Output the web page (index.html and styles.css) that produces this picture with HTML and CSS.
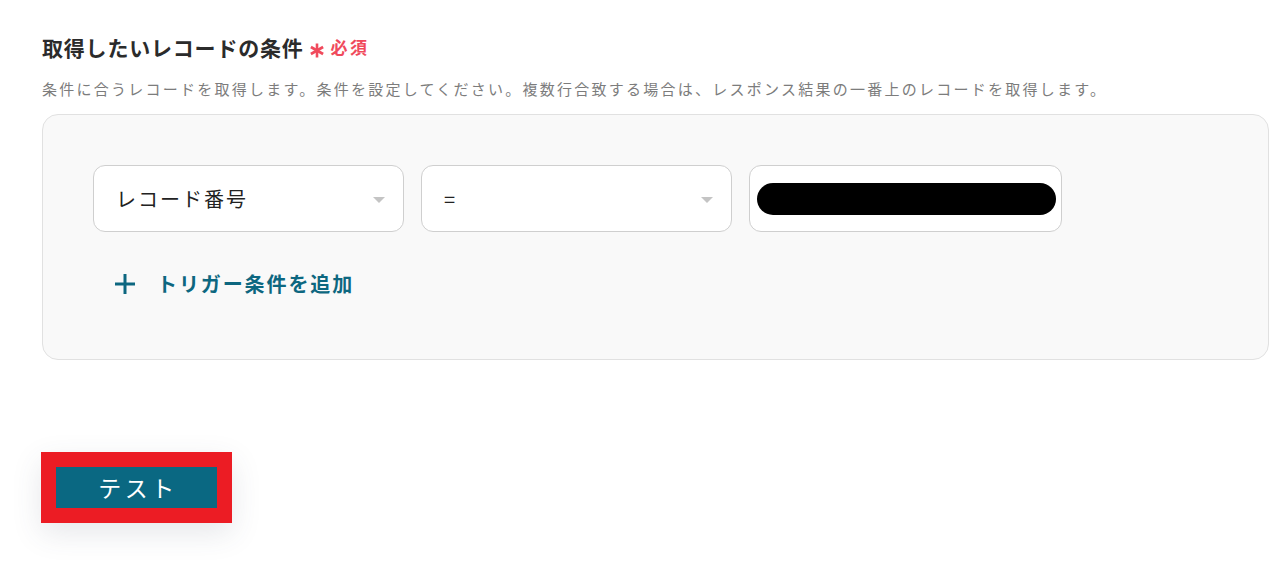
FILE: index.html
```html
<!DOCTYPE html>
<html lang="ja">
<head>
<meta charset="utf-8">
<link rel="stylesheet" href="styles.css">
</head>
<body>
<div class="page">
  <div class="title">取得したいレコードの条件<span class="req"><svg class="ast" width="14" height="15" viewBox="0 0 14 15"><g stroke="#f04a5c" stroke-width="2.6" stroke-linecap="butt"><line x1="7" y1="0.5" x2="7" y2="14.5"/><line x1="0.9" y1="4" x2="13.1" y2="11"/><line x1="0.9" y1="11" x2="13.1" y2="4"/></g></svg>必須</span></div>
  <div class="desc">条件に合うレコードを取得します。条件を設定してください。複数行合致する場合は、レスポンス結果の一番上のレコードを取得します。</div>
  <div class="box">
    <div class="row">
      <div class="field select"><span class="val">レコード番号</span><span class="arrow"></span></div>
      <div class="field select"><span class="val">=</span><span class="arrow"></span></div>
      <div class="field input"><span class="redact"></span></div>
    </div>
    <div class="add"><svg class="plus" width="20" height="20" viewBox="0 0 20 20"><g stroke="#0d6780" stroke-width="3"><line x1="10" y1="0" x2="10" y2="20"/><line x1="0" y1="10" x2="20" y2="10"/></g></svg><span class="addtext">トリガー条件を追加</span></div>
  </div>
  <div class="btnwrap"><button class="btn">テスト</button></div>
</div>
</body>
</html>
```
FILE: styles.css
```css
html, body { margin: 0; padding: 0; background: #fff; }
body { font-family: "Noto Sans CJK JP", "Noto Sans", sans-serif; }
.page { padding: 35px 13px 60px 42px; }
.title { font-size: 21px; line-height: 24px; font-weight: 700; color: #2b2b2b; letter-spacing: 0.8px; display: flex; align-items: center; }
.req { color: #f04a5c; font-size: 17px; font-weight: 700; margin-left: 6px; display: flex; align-items: center; letter-spacing: 2.5px; }
.ast { display: block; margin-right: 7px; position: relative; top: 3px; }
.desc { margin-top: 20px; font-size: 15px; line-height: 20px; color: #7c7c7c; letter-spacing: 2.25px; white-space: nowrap; }
.box { margin-top: 15px; background: #f9f9f9; border: 1px solid #e1e1e1; border-radius: 16px; padding: 50px 50px 60px 50px; height: 246px; box-sizing: border-box; }
.row { display: flex; gap: 17px; }
.field { width: 311px; height: 67px; box-sizing: border-box; background: #fff; border: 1px solid #cfcfcf; border-radius: 12px; display: flex; align-items: center; position: relative; }
.select .val { padding-left: 22px; font-size: 20px; color: #222; letter-spacing: 2px; }
.arrow { position: absolute; right: 18px; top: 31px; width: 0; height: 0; border-left: 6px solid transparent; border-right: 6px solid transparent; border-top: 6px solid #c4c4c4; }
.input { width: 313px; padding-left: 7px; }
.redact { display: block; width: 299px; height: 32px; background: #000; border-radius: 16px; }
.add { margin-top: 36px; height: 30px; display: flex; align-items: center; color: #0d6780; font-weight: 700; padding-left: 22px; }
.plus { display: block; margin-right: 22px; position: relative; top: 1px; }
.addtext { font-size: 20px; letter-spacing: 1.9px; }
.btnwrap { margin-top: 92px; margin-left: -1px; width: 161px; border: 15px solid #ec1c24; box-shadow: 0 10px 30px rgba(60, 70, 90, 0.13); }
.btn { display: block; width: 161px; height: 41px; border: 0; background: #0a6882; color: #fff; font-family: "Noto Sans CJK JP", sans-serif; font-size: 23px; letter-spacing: 3.5px; padding: 0 0 0 3px; line-height: 41px; }
```
